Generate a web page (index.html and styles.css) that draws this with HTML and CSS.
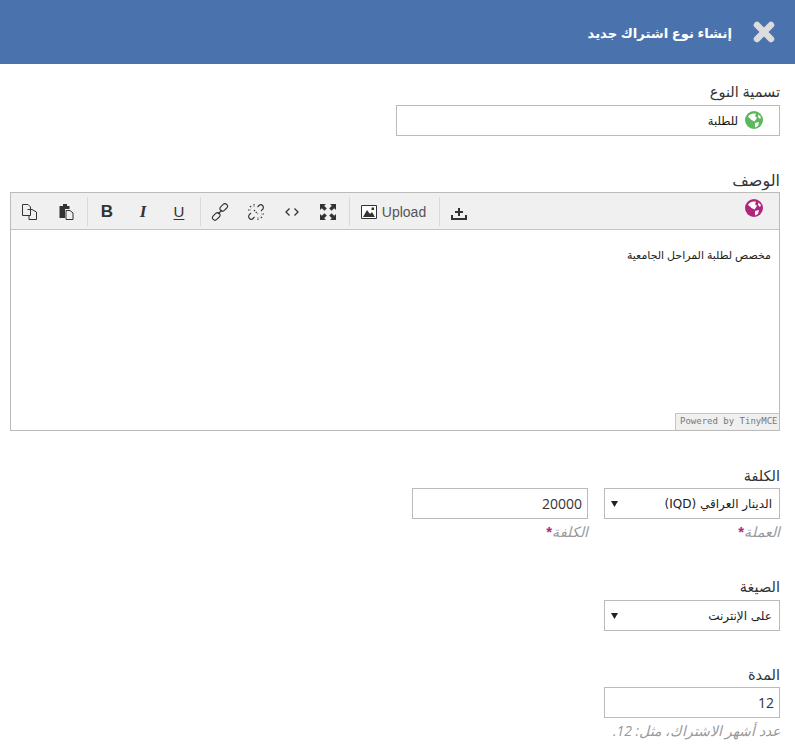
FILE: index.html
```html
<!DOCTYPE html>
<html lang="ar" dir="rtl">
<head>
<meta charset="utf-8">
<title>إنشاء نوع اشتراك جديد</title>
<link rel="stylesheet" href="styles.css">
</head>
<body>
<header class="head">
  <svg class="close" viewBox="0 0 22 22" width="22" height="22"><path d="M4 4 18 18M18 4 4 18" stroke="#dcdcdc" stroke-width="6.5" stroke-linecap="round" fill="none"/></svg>
  <h1 class="title">إنشاء نوع اشتراك جديد</h1>
</header>
<main class="form">
  <section class="field f-name">
    <label class="lbl">تسمية النوع</label>
    <div class="name-wrap">
      <input class="inp inp-name" value="للطلبة">
      <svg class="globe" viewBox="0 0 18 18" width="18" height="18"><circle cx="9" cy="9" r="9" fill="#5cb85c"/><path d="M3 6C5 2.500 9 2 11 3L10 5 12 7 9.500 10.500 6.500 9 5 7.500ZM10 12 14 11 13 15 10 16.500ZM13.500 3.500 16 6 15 8 13 6Z" fill="#fff"/></svg>
    </div>
  </section>
  <section class="field f-desc">
    <label class="lbl lbl-desc">الوصف</label>
    <div class="editor">
      <div class="toolbar" dir="ltr">
        <button class="btn"><svg viewBox="0 0 18 18" width="18" height="18" fill="none" stroke="#333"><path d="M1.500 1.500H7L9.500 4V12.500H1.500ZM6.500 6.500H11L15.500 9V16.500H8V12.500"/></svg></button>
        <button class="btn"><svg viewBox="0 0 18 18" width="18" height="18" fill="#333"><path d="M6 1H10V3H12.500V6H8V15H2.500V3H6Z"/><path d="M9 7.500H13L16 10V16.500H9Z" fill="none" stroke="#333"/></svg></button>
        <span class="sep"></span>
        <button class="btn"><span class="g g-b">B</span></button>
        <button class="btn"><span class="g g-i">I</span></button>
        <button class="btn"><span class="g g-u">U</span></button>
        <span class="sep"></span>
        <button class="btn"><svg viewBox="0 0 18 18" width="18" height="18" fill="none" stroke="#333" stroke-width="1.100"><rect x="8.500" y="2" width="8.500" height="5" rx="2.500" transform="rotate(-45 12.700 4.500)"/><rect x="1" y="11" width="8.500" height="5" rx="2.500" transform="rotate(-45 5.200 13.500)"/><path d="M7 11 11 7"/></svg></button>
        <button class="btn"><svg viewBox="0 0 18 18" width="18" height="18" fill="none" stroke="#333" stroke-width="1.100"><path d="M10.500 4 12.500 2Q14 1 15.500 2.500T16 6L14 8M7.500 14 5.500 16Q4 17 2.500 15.500T2 12L4 10"/><path d="M7 1V4M1 7H4M3 3 5 5M11 17V14M17 11H14M15 15 13 13M7 7 11 11" stroke-dasharray="1.500 1"/></svg></button>
        <button class="btn"><svg viewBox="0 0 18 18" width="18" height="18" fill="none" stroke="#333" stroke-width="1.300"><path d="M6.500 5.500 3 9 6.500 12.500M11.500 5.500 15 9 11.500 12.500"/></svg></button>
        <button class="btn"><svg viewBox="0 0 18 18" width="18" height="18" fill="#333"><path d="M1 1H7L5.200 2.800 7.800 5.400 5.400 7.800 2.800 5.200 1 7ZM17 1V7L15.200 5.200 12.600 7.800 10.200 5.400 12.800 2.800 11 1ZM1 17V11L2.800 12.800 5.400 10.200 7.800 12.600 5.200 15.200 7 17ZM17 17H11L12.800 15.200 10.200 12.600 12.600 10.200 15.200 12.800 17 11Z"/></svg></button>
        <span class="sep"></span>
        <button class="btn btn-up"><svg viewBox="0 0 16 14" width="16" height="14"><path d="M.5.5H15.500V13.500H.5Z" fill="#fff" stroke="#333"/><path d="M2 12 6 5 9 9 11 7 14 12Z" fill="#333"/><rect x="10.500" y="2.500" width="2.500" height="2.500" fill="#333"/></svg><span class="up-txt">Upload</span></button>
        <span class="sep"></span>
        <button class="btn"><svg viewBox="0 0 18 18" width="18" height="18" fill="#333"><path d="M1 12H3V15H15V12H17V17H1ZM8 5H10V8H13V10H10V13H8V10H5V8H8Z"/></svg></button>
      </div>
      <svg class="globe globe-ed" viewBox="0 0 18 18" width="18" height="18"><circle cx="9" cy="9" r="9" fill="#b0267c"/><path d="M3 6C5 2.500 9 2 11 3L10 5 12 7 9.500 10.500 6.500 9 5 7.500ZM10 12 14 11 13 15 10 16.500ZM13.500 3.500 16 6 15 8 13 6Z" fill="#fff"/></svg>
      <div class="ed-body">
        <p class="ed-text">مخصص لطلبة المراحل الجامعية</p>
        <span class="powered" dir="ltr">Powered by TinyMCE</span>
      </div>
    </div>
  </section>
  <section class="field f-cost">
    <label class="lbl">الكلفة</label>
    <div class="cost-row">
      <div class="col">
        <select class="inp sel"><option>الدينار العراقي (IQD)</option></select>
        <p class="hint">العملة<b class="req">*</b></p>
      </div>
      <div class="col">
        <input class="inp" value="20000">
        <p class="hint">الكلفة<b class="req">*</b></p>
      </div>
    </div>
  </section>
  <section class="field f-format">
    <label class="lbl">الصيغة</label>
    <select class="inp sel"><option>على الإنترنت</option></select>
  </section>
  <section class="field f-dur">
    <label class="lbl">المدة</label>
    <input class="inp" value="12">
    <p class="hint">عدد أشهر الاشتراك، مثل: 12.</p>
  </section>
</main>
</body>
</html>
```
FILE: styles.css
```css
* { box-sizing: border-box; }
html, body { margin: 0; padding: 0; }
body {
  width: 795px;
  height: 747px;
  overflow: hidden;
  background: #fff;
  color: #333;
  font-family: "Open Sans", "DejaVu Sans", sans-serif;
  font-size: 14px;
}
.head {
  height: 64px;
  background: #4a72ad;
  display: flex;
  align-items: center;
  padding-right: 20px;
  gap: 21px;
}
.close { flex: none; }
.title {
  margin: 2px 0 0;
  color: #fff;
  font-size: 13.2px;
  font-weight: 700;
  line-height: 20px;
}
.form { padding: 0 15px 0 10px; }
.field { display: flex; flex-direction: column; align-items: flex-start; }
.lbl {
  display: block;
  font-size: 14.5px;
  line-height: 20px;
  height: 20px;
  color: #333;
}
.lbl-desc { font-size: 16px; }
.inp {
  width: 176px;
  height: 31px;
  border: 1px solid #bbb;
  border-radius: 0;
  background: #fff;
  color: #333;
  font-family: inherit;
  font-size: 14px;
  padding: 0 5px;
  margin: 0;
  outline: none;
  display: block;
}
.sel {
  appearance: none;
  font-family: "DejaVu Sans", sans-serif;
  font-size: 12px;
  padding: 0 7px;
  color: #222;
  background: #fff url("data:image/svg+xml,%3Csvg xmlns='http://www.w3.org/2000/svg' width='7' height='6'%3E%3Cpath d='M0 0H7L3.500 6Z' fill='%23222'/%3E%3C/svg%3E") no-repeat 6px 12px;
}
.f-name { padding-top: 18px; }
.f-name .lbl { height: 23px; }
.name-wrap { position: relative; }
.inp-name { width: 384px; padding-right: 41px; font-size: 11.500px; color: #111; }
.globe { position: absolute; right: 17px; top: 6px; }
.f-desc { padding-top: 34px; width: 770px; }
.f-desc .lbl { height: 22px; }
.editor {
  position: relative;
  width: 770px;
  height: 239px;
  border: 1px solid #bbb;
  display: flex;
  flex-direction: column;
}
.toolbar {
  height: 37px;
  flex: none;
  background: #f0f0f0;
  border-bottom: 1px solid #c5c5c5;
  display: flex;
  align-items: center;
  padding-left: 1px;
}
.btn {
  width: 36px;
  height: 36px;
  border: 0;
  background: none;
  padding: 2px 0 0;
  display: flex;
  align-items: center;
  justify-content: center;
  flex: none;
  color: #333;
}
.btn-up { width: 85px; gap: 5px; }
.up-txt { font-family: "Liberation Sans", sans-serif; font-size: 14px; color: #555; }
.sep { width: 1px; height: 29px; background: #d9d9d9; flex: none; margin: 0 1.5px 0 2.5px; }
.g { font-size: 17px; line-height: 18px; font-family: "Liberation Sans", sans-serif; }
.g-b { font-weight: 700; }
.g-i { font-style: italic; font-family: "Liberation Serif", serif; font-weight: 700; }
.g-u { text-decoration: underline; text-underline-offset: 2px; font-size: 15px; }
.globe-ed { right: 16px; top: 6px; }
.ed-body { flex: 1; position: relative; padding: 17px 8px 0 0; }
.ed-text { margin: 0; font-size: 11px; line-height: 16px; color: #222; }
.powered {
  position: absolute;
  right: 0;
  bottom: 0;
  width: 104px;
  height: 17px;
  background: #f0f0f0;
  border: 1px solid #c5c5c5;
  border-right: 0;
  border-bottom: 0;
  font-family: "DejaVu Sans Mono", monospace;
  font-size: 9px;
  line-height: 15px;
  padding-left: 4px;
  color: #777;
  text-align: left;
}
.f-cost { padding-top: 35px; }
.f-cost .lbl { height: 22px; }
.cost-row { display: flex; gap: 16px; }
.col { width: 176px; }
.hint {
  margin: 5px 0 0;
  font-size: 14px;
  line-height: 16px;
  font-style: italic;
  color: #999;
}
.req { color: #b0267c; font-family: "Liberation Sans", sans-serif; font-size: 15px; line-height: 0; font-weight: 700; font-style: normal; }
.f-format { padding-top: 37px; }
.f-format .lbl { height: 23px; }
.f-dur { padding-top: 34px; }
.f-dur .lbl { height: 22px; }
```
